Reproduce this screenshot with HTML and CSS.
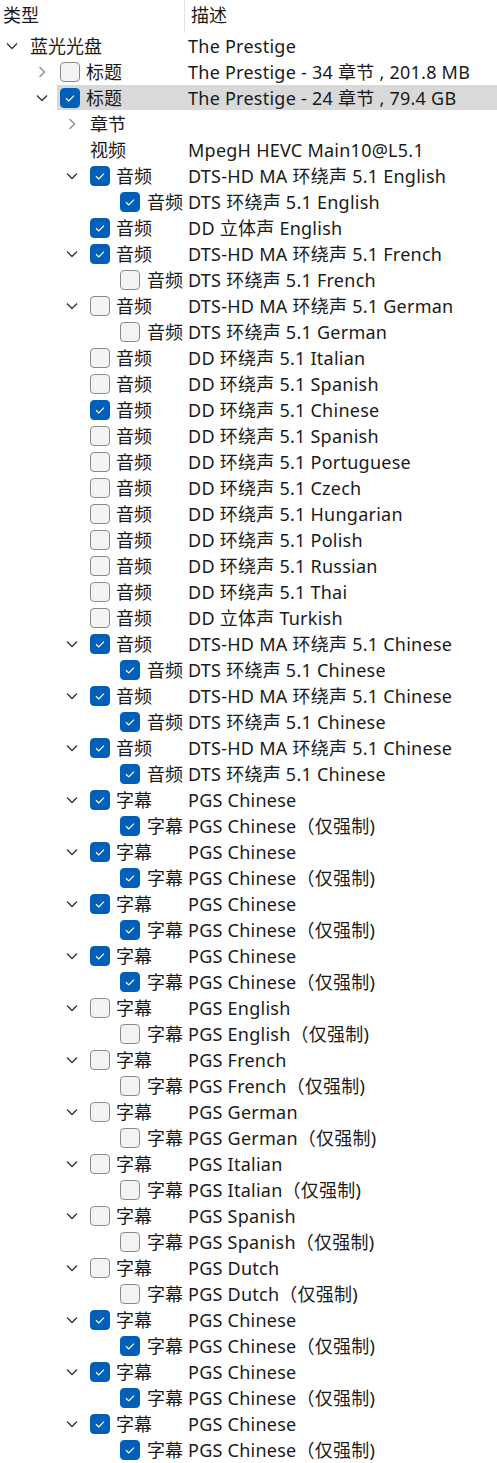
FILE: index.html
```html
<!DOCTYPE html>
<html>
<head>
  <meta charset="UTF-8">
  <title>Disc Tree</title>
  <link rel="stylesheet" href="styles.css">
</head>
<body>
  <div class="head">
    <div class="col-type">类型</div>
    <div class="col-desc">描述</div>
  </div>

  <div class="tree" id="tree"></div>

  <script src="tree.js"></script>
</body>
</html>
```

FILE: tree.js
```js
// 每行: [层级, 折叠状态(o 展开 / c 折叠 / - 无), 勾选(1 / 0 / - 无), 名称, 描述, 选中]
var rows = [
  [0, 'o', '-', '蓝光光盘', 'The Prestige'],
  [1, 'c', 0, '标题', 'The Prestige - 34 章节 , 201.8 MB'],
  [1, 'o', 1, '标题', 'The Prestige - 24 章节 , 79.4 GB', true],
  [2, 'c', '-', '章节', ''],
  [2, '-', '-', '视频', 'MpegH HEVC Main10@L5.1'],
  [2, 'o', 1, '音频', 'DTS-HD MA 环绕声 5.1 English'],
  [3, '-', 1, '音频', 'DTS 环绕声 5.1 English'],
  [2, '-', 1, '音频', 'DD 立体声 English'],
  [2, 'o', 1, '音频', 'DTS-HD MA 环绕声 5.1 French'],
  [3, '-', 0, '音频', 'DTS 环绕声 5.1 French'],
  [2, 'o', 0, '音频', 'DTS-HD MA 环绕声 5.1 German'],
  [3, '-', 0, '音频', 'DTS 环绕声 5.1 German'],
  [2, '-', 0, '音频', 'DD 环绕声 5.1 Italian'],
  [2, '-', 0, '音频', 'DD 环绕声 5.1 Spanish'],
  [2, '-', 1, '音频', 'DD 环绕声 5.1 Chinese'],
  [2, '-', 0, '音频', 'DD 环绕声 5.1 Spanish'],
  [2, '-', 0, '音频', 'DD 环绕声 5.1 Portuguese'],
  [2, '-', 0, '音频', 'DD 环绕声 5.1 Czech'],
  [2, '-', 0, '音频', 'DD 环绕声 5.1 Hungarian'],
  [2, '-', 0, '音频', 'DD 环绕声 5.1 Polish'],
  [2, '-', 0, '音频', 'DD 环绕声 5.1 Russian'],
  [2, '-', 0, '音频', 'DD 环绕声 5.1 Thai'],
  [2, '-', 0, '音频', 'DD 立体声 Turkish']
];

for (var i = 0; i < 3; i++) {
  rows.push([2, 'o', 1, '音频', 'DTS-HD MA 环绕声 5.1 Chinese']);
  rows.push([3, '-', 1, '音频', 'DTS 环绕声 5.1 Chinese']);
}

var subs = [
  [1, 'Chinese'], [1, 'Chinese'], [1, 'Chinese'], [1, 'Chinese'],
  [0, 'English'], [0, 'French'], [0, 'German'], [0, 'Italian'],
  [0, 'Spanish'], [0, 'Dutch'],
  [1, 'Chinese'], [1, 'Chinese'], [1, 'Chinese']
];
subs.forEach(function (s) {
  rows.push([2, 'o', s[0], '字幕', 'PGS ' + s[1]]);
  rows.push([3, '-', s[0], '字幕', 'PGS ' + s[1] + '（仅强制)']);
});

var chevOpen = '<svg width="12" height="8" viewBox="0 0 12 8"><path d="M1 1.5 L6 6.5 L11 1.5" fill="none" stroke="#333" stroke-width="1.3"/></svg>';
var chevClosed = '<svg width="8" height="12" viewBox="0 0 8 12"><path d="M1.5 1 L6.5 6 L1.5 11" fill="none" stroke="#8a8a8a" stroke-width="1.3"/></svg>';
var tick = '<svg width="20" height="20" viewBox="0 0 20 20"><path d="M6 10.3 L8.8 13 L14 7.6" fill="none" stroke="#fff" stroke-width="1.2"/></svg>';

var tree = document.getElementById('tree');
var html = '';
rows.forEach(function (r) {
  var cls = 'row lv' + r[0] + (r[5] ? ' selected' : '');
  var chev = r[1] === 'o' ? chevOpen : (r[1] === 'c' ? chevClosed : '');
  var box = '';
  if (r[2] === 1) box = '<span class="check on">' + tick + '</span>';
  else if (r[2] === 0) box = '<span class="check"></span>';
  html += '<div class="' + cls + '">' +
    '<div class="name-cell"><span class="chev">' + chev + '</span>' + box +
    '<span class="name">' + r[3] + '</span></div>' +
    '<div class="desc">' + r[4] + '</div></div>';
});
tree.innerHTML = html;
```

FILE: styles.css
```css
body {
  margin: 0;
  background: #fff;
  color: #1a1a1a;
  font-family: "Noto Sans", "Noto Sans CJK SC", sans-serif;
  font-size: 18px;
  overflow: hidden;
}

/* 表头 */
.head {
  display: grid;
  grid-template-columns: 184px 1fr;
  height: 33px;
  line-height: 31px;
}

.col-type {
  padding-left: 3px;
}

.col-desc {
  border-left: 1px solid #e3e3e3;
  padding-left: 6px;
}

/* 树 */
.row {
  display: grid;
  grid-template-columns: 184px 1fr;
  height: 26px;
  line-height: 26px;
  white-space: nowrap;
}

.row.selected {
  background: linear-gradient(to right, transparent 57px, #d9d9d9 57px);
  background-size: 100% 25px;
  background-repeat: no-repeat;
}

.name-cell {
  display: flex;
  align-items: center;
  overflow: hidden;
}

.lv1 .name-cell { padding-left: 30px; }
.lv2 .name-cell { padding-left: 60px; }
.lv3 .name-cell { padding-left: 90px; }

.chev {
  width: 30px;
  flex: none;
  display: flex;
  justify-content: center;
  padding-right: 6px;
  box-sizing: border-box;
}

.chev svg {
  display: block;
}

.check {
  flex: none;
  width: 20px;
  height: 20px;
  box-sizing: border-box;
  border: 1px solid #8b8b8b;
  border-radius: 4px;
  background: #f3f3f3;
  margin-right: 6px;
}

.check.on {
  background: #005fb8;
  border-color: #005fb8;
}

.check.on svg {
  display: block;
  margin: -1px;
}

.lv3 .check {
  margin-right: 7px;
}

.desc {
  padding-left: 4px;
  overflow: hidden;
  letter-spacing: 0.25px;
}
```
